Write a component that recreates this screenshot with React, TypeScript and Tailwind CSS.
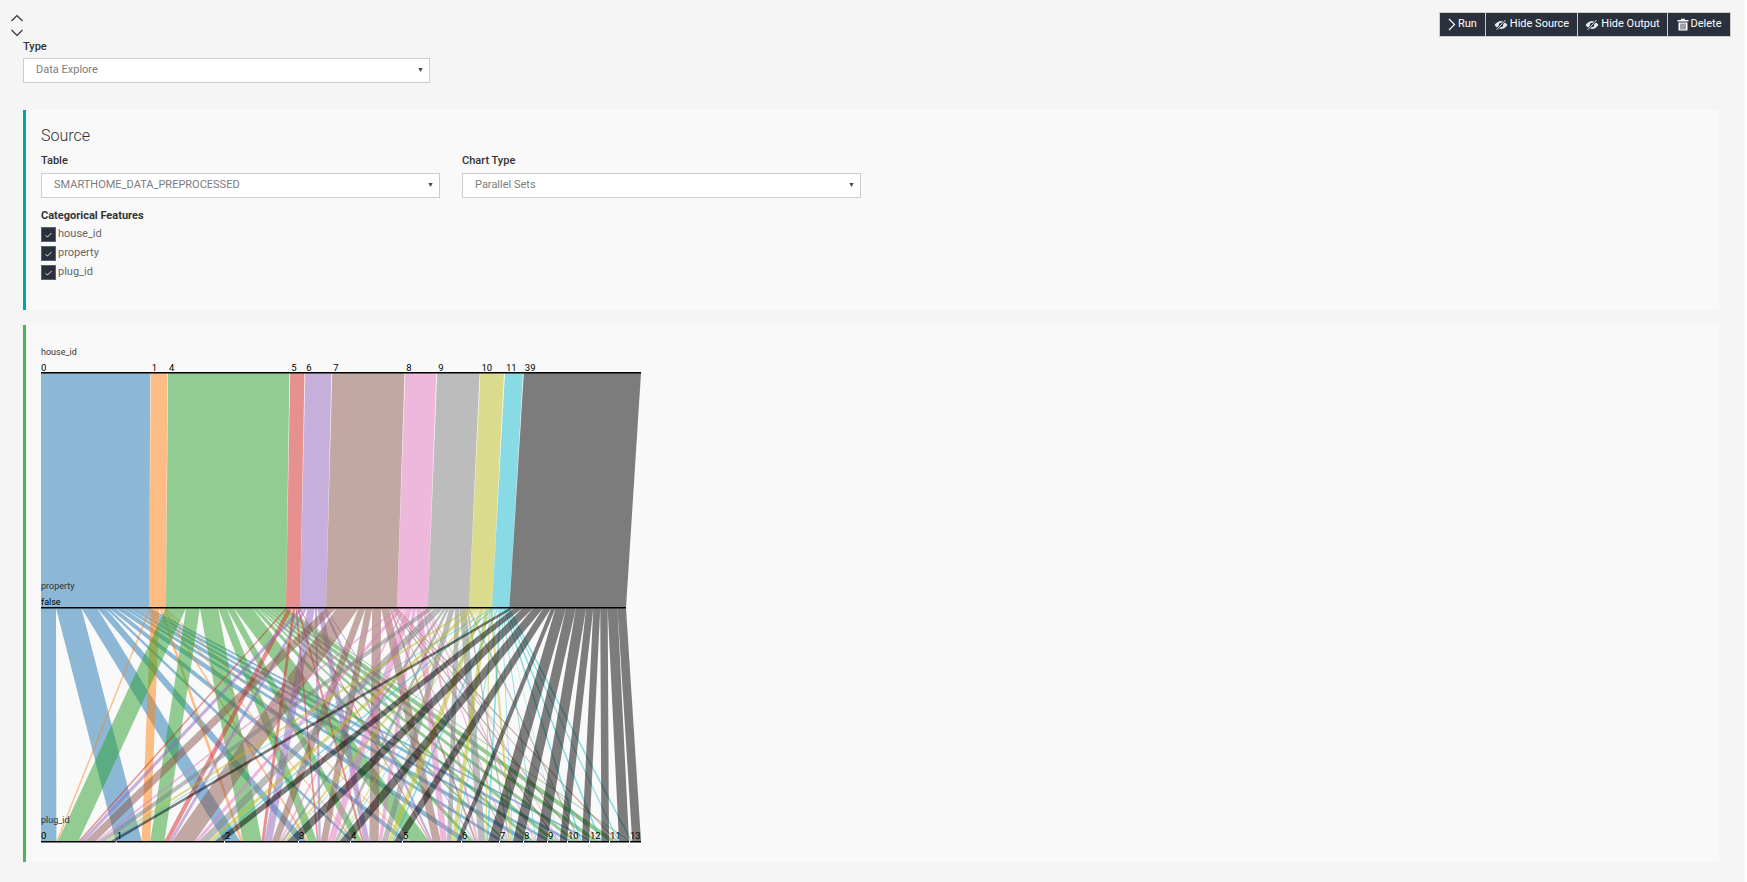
import React from 'react';

const COLORS = ['#1f77b4', '#ff7f0e', '#2ca02c', '#d62728', '#9467bd', '#8c564b', '#e377c2', '#7f7f7f', '#bcbd22', '#17becf', '#000000'];

// x positions on the page, shifted by the chart's left edge in CHART_X
const CHART_X = 41;
const HOUSES = [
  { label: '0', from: 41, to: 150.2 },
  { label: '1', from: 150.8, to: 167.3 },
  { label: '4', from: 168, to: 289.4 },
  { label: '5', from: 290.2, to: 304.5 },
  { label: '6', from: 305.3, to: 331.4 },
  { label: '7', from: 332.2, to: 404.5 },
  { label: '8', from: 405.3, to: 436.3 },
  { label: '9', from: 437.2, to: 479.6 },
  { label: '10', from: 480.4, to: 504 },
  { label: '11', from: 505, to: 523 },
  { label: '39', from: 523.8, to: 641 },
];
const MID_EDGES = [41, 149.4, 166, 286, 300, 326, 397, 427.8, 469, 492, 509.4, 626];

const PLUGS = [
  { label: '0', from: 41 },
  { label: '1', from: 115.7 },
  { label: '2', from: 224 },
  { label: '3', from: 298 },
  { label: '4', from: 350 },
  { label: '5', from: 402 },
  { label: '6', from: 461 },
  { label: '7', from: 499 },
  { label: '8', from: 523 },
  { label: '9', from: 547 },
  { label: '10', from: 567 },
  { label: '12', from: 589 },
  { label: '11', from: 609 },
  { label: '13', from: 629 },
];

// rough share of every house (rows) on every plug (columns)
const SEED = [
  [13.3, 23, 14, 7, 3, 5, 7, 5, 6, 4, 5, 3, 0, 0],
  [1.3, 7.5, 2.3, 1.5, 1, 1, 0, 0, 0, 0, 0, 0, 0, 0],
  [23, 16, 21, 9.3, 8, 19, 5, 3, 4, 5, 5, 6, 7, 1.5],
  [2, 5, 3, 1.5, 2, 1, 0, 0, 0, 0, 0, 0, 0, 0],
  [4, 3, 7, 2, 5, 2, 1, 0, 0, 0, 0, 0, 0, 0],
  [12, 25, 8, 7, 10, 8, 2, 1, 0, 1.5, 1.5, 1, 1.5, 0],
  [4, 6, 3, 10, 5, 8, 3, 2, 2, 1.5, 0, 0, 0, 0],
  [5, 7, 2, 2, 4, 3, 5, 1, 0, 0, 1, 0, 0, 0],
  [3, 4, 2, 1, 4, 3, 1, 2, 0, 0, 0, 0, 0, 0],
  [2, 2.8, 1, 1, 2, 1, 2, 1, 1, 0.5, 2, 2, 1.5, 2],
  [5, 9, 11, 10, 8, 4, 11, 11, 10, 7, 7, 7, 9, 8],
];

const plugEdge = (i: number) => (i + 1 < PLUGS.length ? PLUGS[i + 1].from : 641);

// scale the seed so rows and columns add up to the widths on the axes
function fitFlows() {
  const m = SEED.map((r) => [...r]);
  const rowTargets = MID_EDGES.slice(1).map((x, i) => ((x - MID_EDGES[i]) * 600) / 585);
  const colTargets = PLUGS.map((p, i) => plugEdge(i) - p.from);
  for (let n = 0; n < 40; n++) {
    m.forEach((r, i) => {
      const s = r.reduce((a, b) => a + b, 0);
      r.forEach((v, j) => (r[j] = (v * rowTargets[i]) / s));
    });
    colTargets.forEach((t, j) => {
      const s = m.reduce((a, r) => a + r[j], 0);
      m.forEach((r) => (r[j] = (r[j] * t) / s));
    });
  }
  return m;
}

function buildRibbons() {
  const flows = fitFlows();
  const plugCursor = PLUGS.map((p) => p.from);
  const out: { d: string; color: string }[] = [];
  let mid = 41;
  flows.forEach((row, h) => {
    row.forEach((w, p) => {
      if (w <= 0) return;
      const midW = (w * 585) / 600;
      const x0 = plugCursor[p];
      out.push({
        d: `${mid - CHART_X},268 ${mid + midW - CHART_X},268 ${x0 + w - CHART_X},501 ${x0 - CHART_X},501`,
        color: COLORS[h],
      });
      plugCursor[p] += w;
      mid += midW;
    });
  });
  return out;
}

const ParallelSets = () => {
  const ribbons = buildRibbons();
  return (
    <svg width="620" height="510" className="block" style={{ fontFamily: 'Roboto, sans-serif' }}>
      <text x="0" y="15" fontSize="9" fill="#333">house_id</text>
      {HOUSES.map((h, i) => (
        <g key={h.label}>
          <polygon
            points={`${h.from - CHART_X},33 ${h.to - CHART_X},33 ${MID_EDGES[i + 1] - CHART_X},268 ${MID_EDGES[i] - CHART_X},268`}
            fill={COLORS[i]}
            fillOpacity="0.5"
          />
          <text x={h.from - CHART_X + (i ? 1 : 0)} y="31" fontSize="9.5" fill="#000">{h.label}</text>
        </g>
      ))}
      <rect x="0" y="32" width="600" height="1.5" fill="#000" />
      {ribbons.map((r, i) => (
        <polygon key={i} points={r.d} fill={r.color} fillOpacity="0.5" />
      ))}
      <text x="0" y="249" fontSize="9" fill="#333">property</text>
      <text x="0" y="265" fontSize="9" fill="#000">false</text>
      <rect x="0" y="267" width="585" height="1.5" fill="#000" />
      <text x="0" y="483" fontSize="9" fill="#333">plug_id</text>
      {PLUGS.map((p, i) => (
        <g key={p.label}>
          <rect x={p.from - CHART_X + (i ? 1 : 0)} y="501" width={plugEdge(i) - p.from - (i ? 1 : 0)} height="1.5" fill="#000" />
          <text x={p.from - CHART_X + (i ? 1 : 0)} y="499" fontSize="9.5" fill="#000">{p.label}</text>
        </g>
      ))}
    </svg>
  );
};

const FakeSelect = ({ value, className }: { value: string; className: string }) => (
  <div className={`flex h-[25px] items-center justify-between border-1 border-[#ccc] bg-white pr-[5px] pl-[12px] text-[11px] text-[#7c7c7c] ${className}`}>
    <span>{value}</span>
    <span className="text-[7px] leading-none text-[#444]">▼</span>
  </div>
);

const Check = ({ label }: { label: string }) => (
  <div className="flex h-[19px] items-center gap-[2px]">
    <span className="flex h-[15px] w-[15px] items-center justify-center border border-[#5b6272] bg-[#2b303d]">
      <svg width="9" height="8" viewBox="0 0 9 8" fill="none">
        <path d="M1.5 4.5L3.5 6L7.5 2" stroke="#e4e4e4" strokeWidth="1" />
      </svg>
    </span>
    <span className="text-[11px] text-[#666]">{label}</span>
  </div>
);

const ChevronRun = () => (
  <svg width="8" height="13" viewBox="0 0 8 13" fill="none">
    <path d="M1 1L6.5 6.5L1 12" stroke="#fff" strokeWidth="1.2" />
  </svg>
);

const EyeSlash = () => (
  <svg width="14" height="12" viewBox="0 0 14 12">
    <path d="M0.5 6C3 3 5 2 7 2C9 2 11 3 13.5 6C11 9 9 10 7 10C5 10 3 9 0.5 6Z" fill="#e8e8e8" />
    <circle cx="7" cy="6" r="2.2" fill="#2b303d" />
    <path d="M2.5 11L11.5 1" stroke="#2b303d" strokeWidth="2.2" />
    <path d="M2.5 11L11.5 1" stroke="#e8e8e8" strokeWidth="0.9" />
  </svg>
);

const TrashBin = () => (
  <svg width="12" height="13" viewBox="0 0 12 13">
    <path d="M4 2V0.8H8V2H11.5V3.6H0.5V2Z" fill="#fff" />
    <path d="M1.5 4.5H10.5V12.5H1.5Z" fill="#fff" />
    <path d="M4 5.5V11.5M6 5.5V11.5M8 5.5V11.5" stroke="#2b303d" strokeWidth="0.9" />
  </svg>
);

const ToolButton = ({ icon, label, className }: { icon: React.ReactNode; label: string; className: string }) => (
  <button className={`flex h-[25px] items-center justify-center gap-[2px] border border-[#ccc] bg-[#2b303d] text-[11px] text-white ${className}`}>
    {icon}
    {label}
  </button>
);

export default function App() {
  return (
    <div className="flex min-h-[882px] w-[1745px] flex-col bg-[#f5f5f5] pr-[26px] pb-[20px] font-['Roboto',sans-serif] text-[#333]">
      <div className="flex h-[39px] items-start justify-between pt-[12px] pl-[8px]">
        <div className="flex flex-col text-[#333]">
          <svg width="18" height="30" viewBox="0 0 18 30" fill="none" className="-mt-[1px]">
            <path d="M3.5 10L9 4.5L14.5 10" stroke="#333" strokeWidth="1.2" />
            <path d="M3.5 19L9 24.5L14.5 19" stroke="#333" strokeWidth="1.2" />
          </svg>
        </div>
        <div className="-mr-[12px] flex">
          <ToolButton icon={<ChevronRun />} label="Run" className="w-[47px]" />
          <ToolButton icon={<EyeSlash />} label="Hide Source" className="-ml-px w-[93px]" />
          <ToolButton icon={<EyeSlash />} label="Hide Output" className="-ml-px w-[91px]" />
          <ToolButton icon={<TrashBin />} label="Delete" className="-ml-px w-[64px]" />
        </div>
      </div>
      <div className="ml-[23px] flex flex-col">
        <label className="text-[11px] leading-[16px] font-medium">Type</label>
        <FakeSelect value="Data Explore" className="mt-[3px] w-[407px]" />
      </div>
      <section className="mt-[27px] ml-[23px] flex h-[200px] flex-col border-l-[3px] border-[#00a2b5] bg-[#f9f9f9] pt-[14px] pl-[15px]">
        <h2 className="text-[16px] leading-[24px] font-light">Source</h2>
        <div className="mt-[5px] flex gap-[22px]">
          <div className="flex w-[399px] flex-col">
            <label className="text-[11px] leading-[16px] font-medium">Table</label>
            <FakeSelect value="SMARTHOME_DATA_PREPROCESSED" className="mt-[4px] w-full" />
          </div>
          <div className="flex w-[399px] flex-col">
            <label className="text-[11px] leading-[16px] font-medium">Chart Type</label>
            <FakeSelect value="Parallel Sets" className="mt-[4px] w-full" />
          </div>
        </div>
        <div className="mt-[10px] text-[11px] leading-[16px] font-bold">Categorical Features</div>
        <div className="flex flex-col pt-[1px]">
          <Check label="house_id" />
          <Check label="property" />
          <Check label="plug_id" />
        </div>
      </section>
      <section className="mt-[15px] ml-[23px] flex h-[537px] flex-col border-l-[3px] border-[#4fb25a] bg-[#f9f9f9] pt-[15px] pl-[15px]">
        <ParallelSets />
      </section>
    </div>
  );
}
